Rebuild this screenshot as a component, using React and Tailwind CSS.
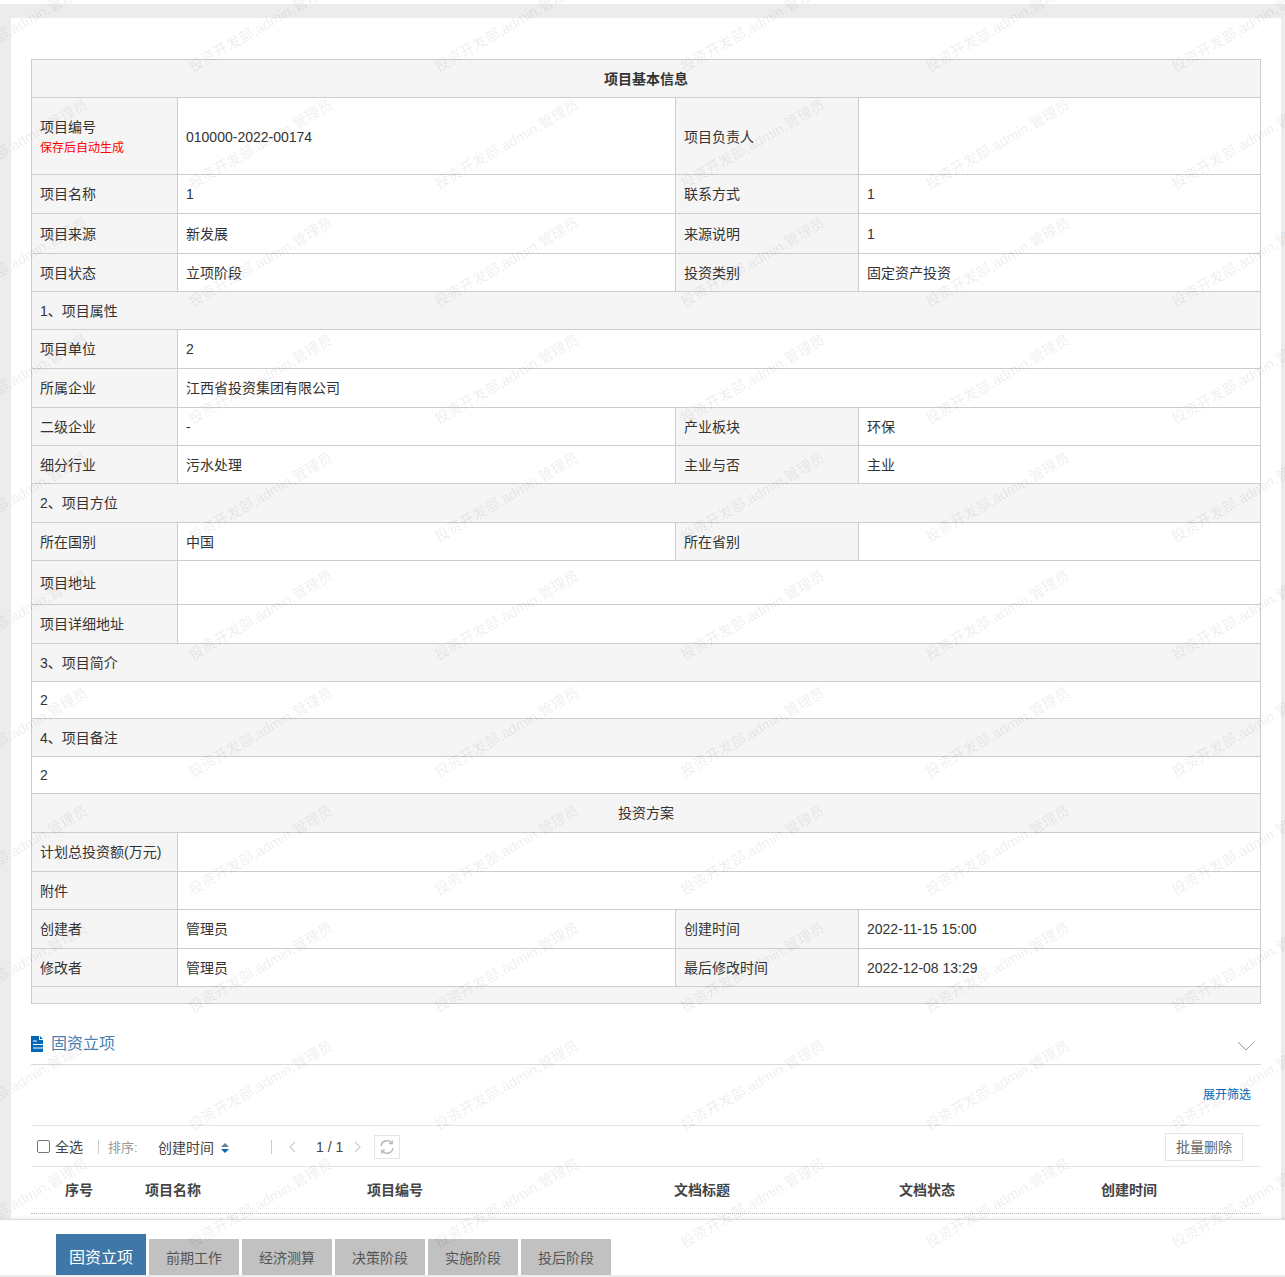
const FONT = "font-['Liberation_Sans','Noto_Sans_CJK_SC',sans-serif]";

// watermark grid, spacing measured off the screenshot
const marks = [];
for (let r = 0; r < 11; r++) {
  for (let c = 0; c < 6; c++) {
    marks.push({ x: 15.5 + c * 245.7, y: 27.5 + r * 117.6 });
  }
}

const label = "border border-[#ccc] bg-[#f5f5f5] px-2 py-0 text-left font-normal";
const value = "border border-[#ccc] px-2 py-0 text-left";
const band = "border border-[#ccc] bg-[#f5f5f5] px-2 py-0";

function Row4({ h, a, b, c, d }) {
  return (
    <tr className={h}>
      <td className={label}>{a}</td>
      <td className={value}>{b}</td>
      <td className={label}>{c}</td>
      <td className={value}>{d}</td>
    </tr>
  );
}

function Row2({ h, a, b }) {
  return (
    <tr className={h}>
      <td className={label}>{a}</td>
      <td className={value} colSpan={3}>{b}</td>
    </tr>
  );
}

function Band({ h, children, center, bold }) {
  return (
    <tr className={h}>
      <td className={`${band} ${center ? "text-center" : "text-left"} ${bold ? "font-bold" : "font-normal"}`} colSpan={4}>
        {children}
      </td>
    </tr>
  );
}

function InfoTable() {
  return (
    <table className="w-[1230px] table-fixed border-collapse text-sm text-[#333]">
      <colgroup>
        <col className="w-[146px]" />
        <col className="w-[498px]" />
        <col className="w-[183px]" />
        <col />
      </colgroup>
      <tbody>
        <Band h="h-[38px]" center bold>项目基本信息</Band>
        <Row4
          h="h-[77px]"
          a={
            <div className="pt-px">
              <div className="leading-[22px]">项目编号</div>
              <div className="mt-px text-xs leading-[18px] text-[#f00]">保存后自动生成</div>
            </div>
          }
          b={<div className="pt-[2px]">010000-2022-00174</div>}
          c={<div className="pt-[2px]">项目负责人</div>}
          d=""
        />
        <Row4 h="h-[39px]" a="项目名称" b="1" c="联系方式" d="1" />
        <Row4 h="h-[40px]" a="项目来源" b="新发展" c="来源说明" d="1" />
        <Row4 h="h-[38px]" a="项目状态" b="立项阶段" c="投资类别" d="固定资产投资" />
        <Band h="h-[38px]">1、项目属性</Band>
        <Row2 h="h-[39px]" a="项目单位" b="2" />
        <Row2 h="h-[39px]" a="所属企业" b="江西省投资集团有限公司" />
        <Row4 h="h-[38px]" a="二级企业" b="-" c="产业板块" d="环保" />
        <Row4 h="h-[38px]" a="细分行业" b="污水处理" c="主业与否" d="主业" />
        <Band h="h-[39px]">2、项目方位</Band>
        <Row4 h="h-[38px]" a="所在国别" b="中国" c="所在省别" d="" />
        <Row2 h="h-[44px]" a="项目地址" b="" />
        <Row2 h="h-[39px]" a="项目详细地址" b="" />
        <Band h="h-[38px]">3、项目简介</Band>
        <tr className="h-[37px]">
          <td className={value} colSpan={4}>2</td>
        </tr>
        <Band h="h-[38px]">4、项目备注</Band>
        <tr className="h-[37px]">
          <td className={value} colSpan={4}>2</td>
        </tr>
        <Band h="h-[39px]" center>投资方案</Band>
        <Row2 h="h-[39px]" a="计划总投资额(万元)" b="" />
        <Row2 h="h-[38px]" a="附件" b="" />
        <Row4 h="h-[39px]" a="创建者" b="管理员" c="创建时间" d="2022-11-15 15:00" />
        <Row4 h="h-[38px]" a="修改者" b="管理员" c="最后修改时间" d="2022-12-08 13:29" />
        <Band h="h-[17px]"></Band>
      </tbody>
    </table>
  );
}

function DocIcon() {
  return (
    <svg width="12" height="16" viewBox="0 0 12 16">
      <path d="M0 0h8v4h4v12H0z M9 0l3 3H9z" fill="#0068b7" />
      <path d="M2 5h4M2 8.5h10M2 12h10" stroke="#fff" strokeWidth="1" />
    </svg>
  );
}

function Toolbar() {
  return (
    <div className="flex h-[41px] items-center border-b border-[#e5e5e5] pt-px text-sm">
      <span className="ml-[6px] size-[13px] rounded-[2px] border border-[#767676] bg-white" />
      <span className="ml-[5px] text-[#444]">全选</span>
      <span className="ml-[15px] h-[14px] w-px bg-[#ccc]" />
      <span className="ml-[9px] mt-[3px] w-[39px] text-[13px] text-[#999]">排序:</span>
      <span className="ml-[11px] mt-[2px] text-[#444]">创建时间</span>
      <svg className="ml-[7px] mt-[2px]" width="8" height="10" viewBox="0 0 8 10">
        <path d="M4 0l4 4H0z" fill="#6b7f93" />
        <path d="M0 6h8l-4 4z" fill="#0068b7" />
      </svg>
      <span className="ml-[42px] h-[14px] w-px bg-[#ccc]" />
      <svg className="ml-[16px]" width="8" height="12" viewBox="0 0 8 12" fill="none">
        <path d="M7 1L2 6l5 5" stroke="#d5d5d5" strokeWidth="1.5" />
      </svg>
      <span className="ml-[20px] w-[25px] whitespace-nowrap text-[#444]">1 / 1</span>
      <svg className="ml-[13px]" width="8" height="12" viewBox="0 0 8 12" fill="none">
        <path d="M1 1l5 5-5 5" stroke="#d5d5d5" strokeWidth="1.5" />
      </svg>
      <span className="ml-[12px] flex h-[24px] w-[26px] items-center justify-center border border-[#e5e5e5]">
        <svg width="16" height="16" viewBox="0 0 16 16" fill="none" stroke="#b5b5bd" strokeWidth="1.4">
          <path d="M2 7a6 6 0 0 1 10.5-3.2" />
          <path d="M14 9a6 6 0 0 1-10.5 3.2" />
          <path d="M13.2 1.5v3h-3M2.8 14.5v-3h3" />
        </svg>
      </span>
      <button className={`ml-auto mr-[18px] h-[28px] w-[78px] border border-[#e5e5e5] bg-white text-sm text-[#666] ${FONT}`}>
        批量删除
      </button>
    </div>
  );
}

function ListHead() {
  return (
    <div className="grid h-[47px] grid-cols-[114px_222px_307px_225px_202px_1fr] items-center border-b border-dotted border-[#bbb] text-sm font-bold text-[#444]">
      <span className="pl-[34px]">序号</span>
      <span>项目名称</span>
      <span>项目编号</span>
      <span>文档标题</span>
      <span>文档状态</span>
      <span>创建时间</span>
    </div>
  );
}

const tabs = ["前期工作", "经济测算", "决策阶段", "实施阶段", "投后阶段"];

function BottomTabs() {
  return (
    <div className="flex h-[56px] shrink-0 items-end gap-[3px] border-t border-[#ddd] bg-white pl-[56px] shadow-[0_-1px_3px_rgba(0,0,0,0.08)]">
      <div className="flex h-[41px] w-[90px] items-center justify-center bg-[#3f77a8] pt-[6px] text-base text-white">固资立项</div>
      {tabs.map((t) => (
        <div key={t} className="flex h-[36px] w-[90px] items-center justify-center bg-[#c1c1c1] pt-px text-sm text-[#555]">
          {t}
        </div>
      ))}
    </div>
  );
}

export default function App() {
  return (
    <div className={`relative flex h-[1277px] flex-col overflow-hidden bg-white ${FONT}`}>
      <div className="mt-1 flex min-h-0 flex-1 flex-col bg-[#ececec] pl-[11px] pr-[4px] pt-[14px]">
        <main className="min-h-0 flex-1 overflow-hidden bg-white pl-[20px] pr-[20px] pt-[41px]">
          <InfoTable />

          <div className="flex h-[61px] items-center border-b border-[#d9d9d9] pt-[20px]">
            <DocIcon />
            <span className="ml-2 text-base text-[#4a7fb0]">固资立项</span>
            <svg className="ml-auto mr-[6px] mt-[4px]" width="18" height="10" viewBox="0 0 18 10" fill="none">
              <path d="M1 1l8 8 8-8" stroke="#999" strokeWidth="1" />
            </svg>
          </div>

          <div className="flex h-[61px] items-center justify-end border-b border-[#e5e5e5] pr-[10px] text-xs text-[#0068b7]">
            展开筛选
          </div>

          <Toolbar />
          <ListHead />
        </main>
        <div className="-ml-[11px] -mr-[4px]">
          <BottomTabs />
        </div>
      </div>
      <div className="h-[2px] shrink-0 bg-[#ececec]" />

      <div className="pointer-events-none absolute inset-0 overflow-hidden">
        {marks.map((m, i) => (
          <span
            key={i}
            className="absolute -translate-x-1/2 -translate-y-1/2 -rotate-30 whitespace-nowrap text-[14.5px] text-black/[0.085]"
            style={{ left: m.x, top: m.y }}
          >
            投资开发部,admin,管理员
          </span>
        ))}
      </div>
    </div>
  );
}
